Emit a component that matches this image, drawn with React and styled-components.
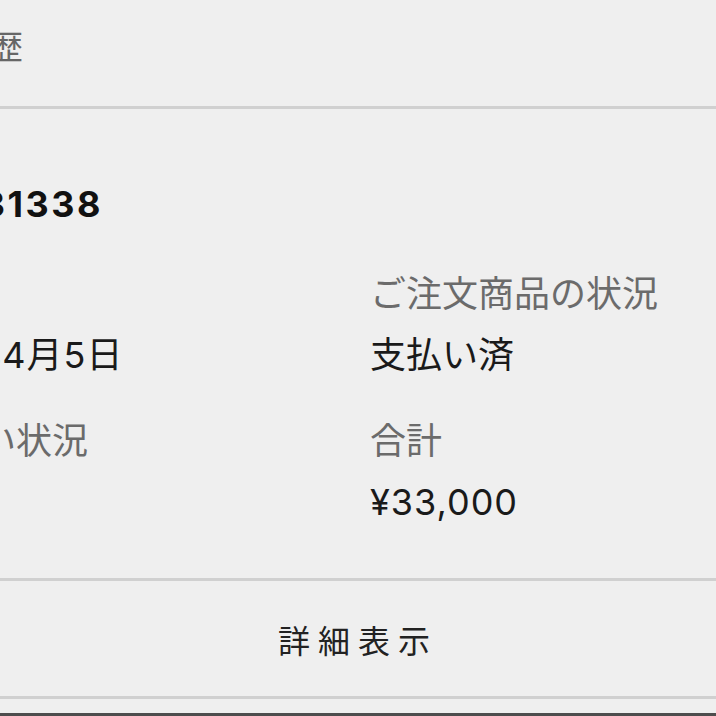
import React from 'react';
import styled, { createGlobalStyle } from 'styled-components';

const GlobalStyle = createGlobalStyle`
  *, *::before, *::after { box-sizing: border-box; }
  html, body {
    margin: 0;
    padding: 0;
    background: #efefef;
  }
  body {
    overflow: hidden;
    font-family: Inter, "Noto Sans CJK JP", sans-serif;
  }
`;

const order = {
    number: '2404131338',
    fields: [
        { label: '注文日', value: '2024年4月5日', numeric: true },
        { label: 'ご注文商品の状況', value: '支払い済' },
        { label: 'お支払い状況', value: '完了' },
        { label: '合計', value: '¥33,000', numeric: true }
    ]
};

const OrderHistory = () => {
    return (
        <Screen>
            <NavBar>
                <NavTitle>購入履歴</NavTitle>
            </NavBar>
            <OrderCard>
                <OrderNumber>{order.number}</OrderNumber>
                <FieldGrid>
                    {order.fields.map(field => (
                        <Field key={field.label}>
                            <FieldLabel>{field.label}</FieldLabel>
                            <FieldValue $numeric={field.numeric}>{field.value}</FieldValue>
                        </Field>
                    ))}
                </FieldGrid>
                <DetailButton type="button">詳細表示</DetailButton>
            </OrderCard>
            <BottomEdge />
        </Screen>
    );
};

export default function App() {
    return (
        <>
            <GlobalStyle />
            <OrderHistory />
        </>
    );
}

const Screen = styled.div`
    width: 716px;
    height: 716px;
    overflow: hidden;
    display: flex;
    flex-direction: column;
    background: #efefef;
`

const NavBar = styled.header`
    flex-shrink: 0;
    height: 109px;
    padding-bottom: 12px;
    display: flex;
    align-items: center;
    border-bottom: 3px solid #d0d0d0;
`

const NavTitle = styled.h1`
    margin: 0 0 0 -109px;
    font-size: 33px;
    font-weight: 400;
    line-height: 40px;
    color: #666;
    white-space: nowrap;
`

const OrderCard = styled.section`
    flex-shrink: 0;
    display: flex;
    flex-direction: column;
    padding-top: 73px;
`

const OrderNumber = styled.div`
    margin-left: -140px;
    font-size: 36px;
    font-weight: 700;
    line-height: 44px;
    letter-spacing: 2.5px;
    color: #111;
    white-space: nowrap;
`

const FieldGrid = styled.div`
    display: grid;
    grid-template-columns: 498px 1fr;
    row-gap: 46px;
    margin: 48px 0 0 -128px;
`

const Field = styled.div`
    display: flex;
    flex-direction: column;
    white-space: nowrap;
`

const FieldLabel = styled.span`
    font-size: 36px;
    line-height: 40px;
    color: #6b6b6b;
`

const FieldValue = styled.span`
    margin-top: 21px;
    font-size: 36px;
    line-height: 40px;
    letter-spacing: ${p => (p.$numeric ? '1px' : '0')};
    color: #1a1a1a;
`

const DetailButton = styled.button`
    margin-top: 56px;
    height: 121px;
    padding: 0;
    display: flex;
    align-items: center;
    justify-content: center;
    background: transparent;
    border: none;
    border-top: 3px solid #d0d0d0;
    border-bottom: 3px solid #d0d0d0;
    font-family: "Noto Sans CJK JP", sans-serif;
    font-size: 32px;
    letter-spacing: 8px;
    color: #222;
`

const BottomEdge = styled.div`
    flex: 1;
    border-bottom: 3px solid #4d4d4d;
`
